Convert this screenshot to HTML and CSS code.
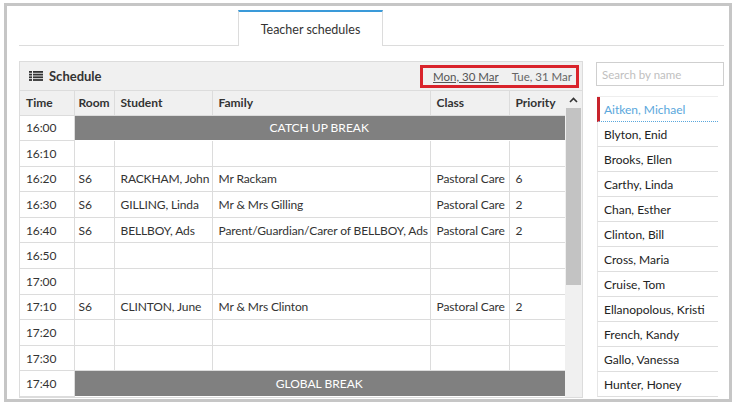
FILE: index.html
```html
<!DOCTYPE html>
<html lang="en">
<head>
    <meta charset="UTF-8">
    <meta name="viewport" content="width=device-width, initial-scale=1.0">
    <title>Teacher schedules</title>

    <link rel="stylesheet" href="styles.css">

</head>
<body>
    <div class="frame">
        <div class="tabs">
            <div class="tab">Teacher schedules</div>
        </div>

        <div class="content">
            <div class="panel">
                <div class="panelHead">
                    <svg class="listIcon" width="14" height="10" viewBox="0 0 14 10">
                        <rect x="0" y="0" width="3" height="1.8" fill="#333"/>
                        <rect x="4" y="0" width="10" height="1.8" fill="#333"/>
                        <rect x="0" y="2.7" width="3" height="1.8" fill="#333"/>
                        <rect x="4" y="2.7" width="10" height="1.8" fill="#333"/>
                        <rect x="0" y="5.4" width="3" height="1.8" fill="#333"/>
                        <rect x="4" y="5.4" width="10" height="1.8" fill="#333"/>
                        <rect x="0" y="8.1" width="3" height="1.8" fill="#333"/>
                        <rect x="4" y="8.1" width="10" height="1.8" fill="#333"/>
                    </svg>
                    <span class="title">Schedule</span>
                    <div class="dates">
                        <a class="day current">Mon, 30 Mar</a>
                        <a class="day">Tue, 31 Mar</a>
                    </div>
                </div>

                <div class="panelBody">
                    <table class="schedule">
                        <colgroup>
                            <col style="width:54px">
                            <col style="width:40px">
                            <col style="width:98px">
                            <col style="width:218px">
                            <col style="width:79px">
                            <col style="width:56px">
                        </colgroup>
                        <thead>
                            <tr>
                                <th>Time</th>
                                <th>Room</th>
                                <th>Student</th>
                                <th>Family</th>
                                <th>Class</th>
                                <th>Priority</th>
                            </tr>
                        </thead>
                        <tbody>
                            <tr><td>16:00</td><td class="break" colspan="5">CATCH UP BREAK</td></tr>
                            <tr><td>16:10</td><td></td><td></td><td></td><td></td><td></td></tr>
                            <tr><td>16:20</td><td>S6</td><td>RACKHAM, John</td><td>Mr Rackam</td><td>Pastoral Care</td><td>6</td></tr>
                            <tr><td>16:30</td><td>S6</td><td>GILLING, Linda</td><td>Mr &amp; Mrs Gilling</td><td>Pastoral Care</td><td>2</td></tr>
                            <tr><td>16:40</td><td>S6</td><td>BELLBOY, Ads</td><td>Parent/Guardian/Carer of BELLBOY, Ads</td><td>Pastoral Care</td><td>2</td></tr>
                            <tr><td>16:50</td><td></td><td></td><td></td><td></td><td></td></tr>
                            <tr><td>17:00</td><td></td><td></td><td></td><td></td><td></td></tr>
                            <tr><td>17:10</td><td>S6</td><td>CLINTON, June</td><td>Mr &amp; Mrs Clinton</td><td>Pastoral Care</td><td>2</td></tr>
                            <tr><td>17:20</td><td></td><td></td><td></td><td></td><td></td></tr>
                            <tr><td>17:30</td><td></td><td></td><td></td><td></td><td></td></tr>
                            <tr><td>17:40</td><td class="break" colspan="5">GLOBAL BREAK</td></tr>
                        </tbody>
                    </table>

                    <div class="scrollbar">
                        <div class="arrow">
                            <svg width="9" height="6" viewBox="0 0 9 6"><path d="M1 5 L4.5 1.5 L8 5" fill="none" stroke="#333" stroke-width="1.6"/></svg>
                        </div>
                        <div class="thumb"></div>
                    </div>
                </div>
            </div>

            <div class="sidebar">
                <input class="search" type="text" placeholder="Search by name">
                <ul class="people">
                    <li class="active">Aitken, Michael</li>
                    <li>Blyton, Enid</li>
                    <li>Brooks, Ellen</li>
                    <li>Carthy, Linda</li>
                    <li>Chan, Esther</li>
                    <li>Clinton, Bill</li>
                    <li>Cross, Maria</li>
                    <li>Cruise, Tom</li>
                    <li>Ellanopolous, Kristi</li>
                    <li>French, Kandy</li>
                    <li>Gallo, Vanessa</li>
                    <li>Hunter, Honey</li>
                </ul>
            </div>
        </div>
    </div>
</body>
</html>
```

FILE: styles.css
```css
* {
    margin: 0;
    padding: 0;
    list-style: none;
    box-sizing: border-box;
}
body{
    background-color: white;
    font-family: Lato, "Open Sans", sans-serif;
    font-size: 12px;
    color: #333;
}
.frame{
    width: 728px;
    height: 399px;
    margin: 3px 0 0 4px;
    border: 3px solid #c6c6c6;
    padding: 4px 5px 0 12px;
    overflow: hidden;
}

/* tabs */
.tabs{
    height: 36px;
    border-bottom: 1px solid #dcdcdc;
    display: flex;
}
.tab{
    margin-left: 219px;
    width: 145px;
    height: 36px;
    border-top: 2px solid #3a9ad9;
    border-left: 1px solid #dcdcdc;
    border-right: 1px solid #dcdcdc;
    background-color: white;
    display: flex;
    align-items: center;
    justify-content: center;
    font-size: 12.5px;
    color: #333;
}

.content{
    display: flex;
    gap: 13px;
    margin-top: 15px;
}

/* schedule panel */
.panel{
    width: 564px;
    border: 1px solid #dcdcdc;
    flex-shrink: 0;
}
.panelHead{
    height: 29px;
    background-color: #f0f0f0;
    border-bottom: 1px solid #dcdcdc;
    display: flex;
    align-items: center;
    padding-left: 9px;
}
.listIcon{
    margin-right: 6px;
}
.title{
    font-weight: bold;
    font-size: 13px;
}
.dates{
    margin-left: auto;
    margin-right: 3px;
    width: 159px;
    height: 23px;
    border: 3px solid #d9232b;
    display: flex;
    align-items: center;
    padding-left: 10px;
    gap: 13px;
    font-size: 11.5px;
    white-space: nowrap;
    overflow: hidden;
}
.day{
    color: #666;
}
.day.current{
    color: #555;
    text-decoration: underline;
}

.panelBody{
    display: flex;
}
.schedule{
    width: 545px;
    table-layout: fixed;
    border-collapse: collapse;
}
.schedule th{
    height: 24px;
    background-color: #f0f0f0;
    text-align: left;
    font-weight: bold;
    padding: 0 6px;
    border-right: 1px solid #dcdcdc;
    border-bottom: 1px solid #dcdcdc;
    white-space: nowrap;
}
.schedule td{
    height: 25.6px;
    padding: 0 5px 0 6px;
    border-right: 1px solid #dcdcdc;
    border-bottom: 1px solid #dcdcdc;
    white-space: nowrap;
    letter-spacing: -0.12px;
    overflow: hidden;
}
.schedule th:nth-child(2),
.schedule td:nth-child(2){
    padding-left: 4px;
}
.schedule th:last-child,
.schedule td:last-child{
    border-right: none;
}
.schedule td.break{
    background-color: #808080;
    color: white;
    text-align: center;
    letter-spacing: 0;
    border-bottom: 1px solid white;
}

.scrollbar{
    width: 17px;
    background-color: #f0f0f0;
    flex-shrink: 0;
}
.arrow{
    height: 17px;
    display: flex;
    align-items: center;
    justify-content: center;
}
.thumb{
    margin-left: 1px;
    width: 15px;
    height: 177px;
    background-color: #c3c3c3;
}

/* people list */
.sidebar{
    width: 128px;
    flex-shrink: 0;
}
.search{
    display: block;
    width: 128px;
    height: 24px;
    margin-top: 1px;
    border: 1px solid #cfcfcf;
    padding-left: 5px;
    font-family: Lato, sans-serif;
    font-size: 11.5px;
    outline: none;
}
.search::placeholder{
    color: #c0c0c0;
}
.people{
    margin-top: 10px;
    margin-left: 1px;
    width: 121px;
    border-top: 1px solid #eeeeee;
}
.people li{
    height: 25px;
    border-left: 1px solid #e6e6e6;
    border-bottom: 1px solid #dedede;
    padding-left: 6px;
    display: flex;
    align-items: center;
    color: #222;
    white-space: nowrap;
}
.people li.active{
    border-left: 3px solid #c8232c;
    border-bottom: 1px dotted #5aa7dc;
    padding-left: 4px;
    color: #5aa7dc;
}
```
